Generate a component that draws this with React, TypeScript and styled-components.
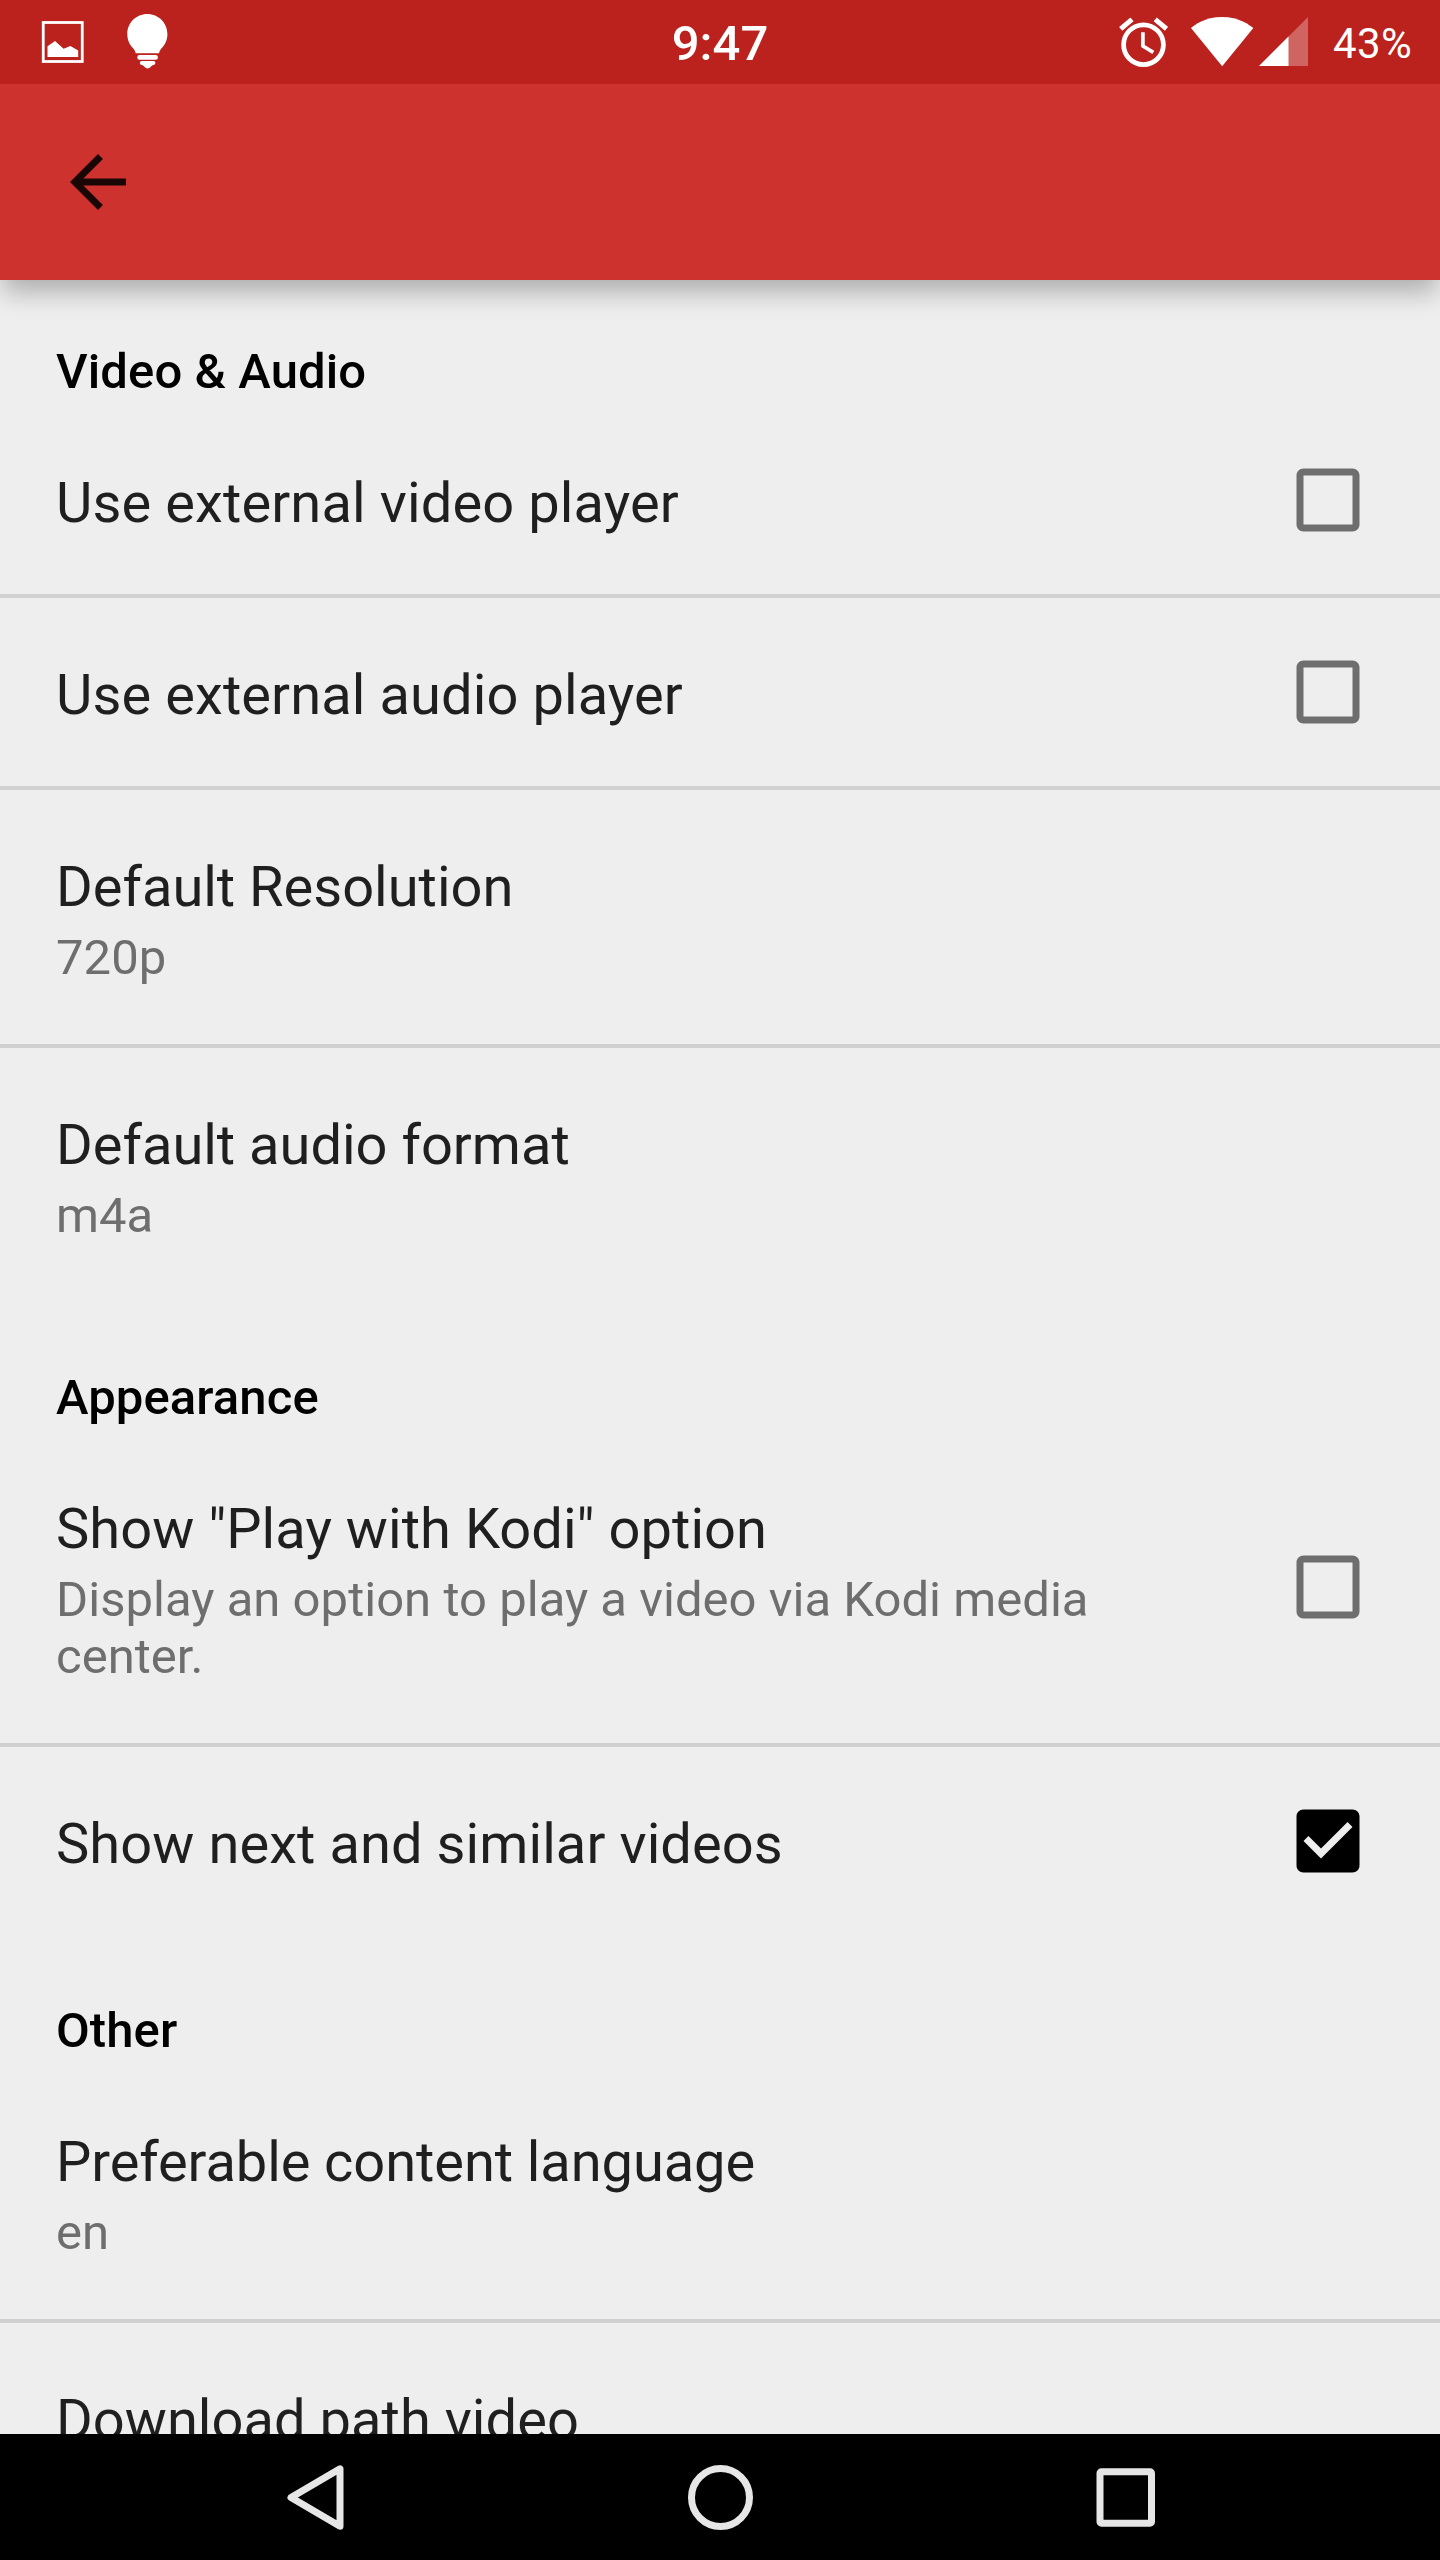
import React from 'react';
import styled, { createGlobalStyle } from 'styled-components';

const GlobalStyle = createGlobalStyle`
  *, *::before, *::after { box-sizing: border-box; }
  html, body { margin: 0; padding: 0; background: #eeeeee; }
  body { font-family: Roboto, "Noto Sans", sans-serif; overflow: hidden; }
  svg { display: block; flex: none; }
`;

const Screen = styled.div`
  width: 1440px;
  height: 2560px;
  display: flex;
  flex-direction: column;
  overflow: hidden;
  background: #eeeeee;
`;

const StatusBar = styled.header`
  flex: none;
  height: 84px;
  padding: 0 28px 0 40px;
  display: grid;
  grid-template-columns: 1fr auto 1fr;
  align-items: center;
  background: #bb211d;
  color: #ffffff;
`;

const StatusGroup = styled.div<{ $end?: boolean }>`
  display: flex;
  align-items: center;
  justify-content: ${(p) => (p.$end ? 'flex-end' : 'flex-start')};
  height: 84px;
`;

const Clock = styled.div`
  font-size: 49px;
  line-height: 58px;
  font-weight: 500;
  padding-top: 4px;
  margin-right: 12px;
`;

const Battery = styled.span`
  font-size: 42px;
  line-height: 50px;
  letter-spacing: 0.35px;
  padding-top: 4px;
  margin-left: 24px;
`;

const AppBar = styled.nav`
  flex: none;
  height: 196px;
  padding: 0 56px;
  display: flex;
  align-items: center;
  background: #cd322e;
  box-shadow: 0 15px 24px -3px rgba(0, 0, 0, 0.27);
  clip-path: inset(0 0 -60px 0);
  z-index: 1;
`;

const IconButton = styled.button`
  border: 0;
  padding: 0;
  background: none;
  color: rgba(0, 0, 0, 0.87);
`;

const Content = styled.main`
  flex: 1;
  min-height: 0;
  overflow: hidden;
`;

const Section = styled.section`
  padding-bottom: 4px;
`;

const SectionTitle = styled.h2`
  margin: 0;
  padding: 63px 56px 6px;
  font-size: 49px;
  line-height: 57px;
  font-weight: 500;
  letter-spacing: 0.1px;
  color: #000000;
`;

const Row = styled.div`
  display: flex;
  align-items: center;
  padding: 0 70px 0 56px;

  & + & {
    border-top: 4px solid #d0d0d0;
  }
`;

const RowText = styled.div`
  flex: 1;
  padding: 64px 140px 58px 0;
`;

const Title = styled.div<{ $tracking?: number }>`
  font-size: 56px;
  line-height: 66px;
  letter-spacing: ${(p) => p.$tracking ?? 0}px;
  color: #1f1f1f;
  white-space: nowrap;
`;

const Summary = styled.div`
  margin-top: 9px;
  font-size: 49px;
  line-height: 57px;
  letter-spacing: 0.03px;
  color: #6e6e6e;
`;

const CheckboxSlot = styled.div`
  padding-bottom: 1px;
`;

const NavBar = styled.footer`
  flex: none;
  height: 126px;
  padding: 0 112px;
  display: grid;
  grid-template-columns: repeat(3, 405px);
  justify-content: center;
  align-items: center;
  justify-items: center;
  background: #000000;
`;

function Checkbox({ checked }: { checked: boolean }) {
  return (
    <CheckboxSlot>
      <svg width="84" height="84" viewBox="0 0 24 24" role="checkbox" aria-checked={checked}>
        {checked ? (
          <path
            fill="#000"
            d="M19 3H5c-1.11 0-2 .9-2 2v14c0 1.1.89 2 2 2h14c1.11 0 2-.9 2-2V5c0-1.1-.89-2-2-2zm-9 14l-5-5 1.41-1.41L10 14.17l7.59-7.59L19 8l-9 9z"
          />
        ) : (
          <path
            fill="#6e6e6e"
            d="M19 5v14H5V5h14m0-2H5c-1.1 0-2 .9-2 2v14c0 1.1.9 2 2 2h14c1.1 0 2-.9 2-2V5c0-1.1-.9-2-2-2z"
          />
        )}
      </svg>
    </CheckboxSlot>
  );
}

interface Preference {
  title: string;
  tracking?: number;
  summary?: string;
  checked?: boolean;
}

const sections: { name: string; items: Preference[] }[] = [
  {
    name: 'Video & Audio',
    items: [
      { title: 'Use external video player', tracking: 0.12, checked: false },
      { title: 'Use external audio player', tracking: 0.1, checked: false },
      { title: 'Default Resolution', summary: '720p' },
      { title: 'Default audio format', summary: 'm4a' },
    ],
  },
  {
    name: 'Appearance',
    items: [
      {
        title: 'Show "Play with Kodi" option',
        tracking: 0.05,
        summary: 'Display an option to play a video via Kodi media center.',
        checked: false,
      },
      { title: 'Show next and similar videos', tracking: 0.08, checked: true },
    ],
  },
  {
    name: 'Other',
    items: [
      { title: 'Preferable content language', tracking: -0.08, summary: 'en' },
      { title: 'Download path video', tracking: 0.04 },
    ],
  },
];

const PictureIcon = () => (
  <svg width="46" height="84" viewBox="40 0 46 84">
    <rect x="43.25" y="22.5" width="39" height="39" fill="none" stroke="#fff" strokeWidth="2.8" />
    <path d="M47.5 57V46.2L55 41l8.6 7.7 6.8-2.8 7.8 4.6V57z" fill="#fff" />
  </svg>
);

const BulbIcon = () => (
  <svg width="84" height="84" viewBox="86 0 84 84">
    <g fill="#fff">
      <path d="M147.3 14c-11.2 0-20 8.9-20 20 0 6 2.3 10.6 5.6 14 1.5 1.6 2.3 3 2.8 5.3h23.3c.5-2.3 1.3-3.7 2.8-5.3 3.3-3.4 5.6-8 5.6-14 0-11.1-8.9-20-20.1-20z" />
      <rect x="137.3" y="55" width="20.6" height="4.8" rx="2.2" />
      <path d="M142 61h11.2a2 2 0 0 1 .4 4c-1.5.3-2.2.9-3 2a3.8 3.8 0 0 1-6 0c-.8-1.1-1.5-1.7-3-2a2 2 0 0 1 .4-4z" />
    </g>
  </svg>
);

const AlarmIcon = () => (
  <svg width="50" height="84" viewBox="1118 0 50 84">
    <g fill="none" stroke="#fff">
      <circle cx="1143.5" cy="44.7" r="19.9" strokeWidth="4.8" />
      <path d="M1142.9 32.2V46l10.4 6.4" strokeWidth="3.7" />
      <path d="M1120.7 28.8l11.3-9.5M1155.2 19.3l11.3 9.5" strokeWidth="4.9" />
    </g>
  </svg>
);

const WifiIcon = () => (
  <svg width="88" height="84" viewBox="1168 0 88 84">
    <path d="M1222.2 66.2L1191 28c3-2.7 14-11 31-11s28 8.300 31.300 11z" fill="#fff" />
  </svg>
);

const SignalIcon = () => (
  <svg width="53" height="84" viewBox="1256 0 53 84">
    <path d="M1259 66L1308 17v49z" fill="#fff" fillOpacity=".3" />
    <path d="M1259 66l29.5-29.5V66z" fill="#fff" />
  </svg>
);

const BackArrow = () => (
  <svg width="84" height="84" viewBox="0 0 24 24">
    <path fill="currentColor" d="M20 11H7.83l5.59-5.59L12 4l-8 8 8 8 1.41-1.41L7.83 13H20v-2z" />
  </svg>
);

const NavIcon = ({ kind }: { kind: 'back' | 'home' | 'recent' }) => (
  <svg width="80" height="80" viewBox="0 0 80 80" fill="none" stroke="#e6e6e6" strokeWidth="7" strokeLinejoin="round">
    {kind === 'back' && <path d="M65 11.8v57.4L16 40.5z" />}
    {kind === 'home' && <circle cx="40.5" cy="40.5" r="29" />}
    {kind === 'recent' && <rect x="15" y="14.7" width="51.5" height="51.5" rx="1.5" />}
  </svg>
);

export default function App() {
  return (
    <>
      <GlobalStyle />
      <Screen>
        <StatusBar>
          <StatusGroup>
            <PictureIcon />
            <BulbIcon />
          </StatusGroup>
          <Clock>9:47</Clock>
          <StatusGroup $end>
            <AlarmIcon />
            <WifiIcon />
            <SignalIcon />
            <Battery>43%</Battery>
          </StatusGroup>
        </StatusBar>
        <AppBar>
          <IconButton aria-label="Back">
            <BackArrow />
          </IconButton>
        </AppBar>
        <Content>
          {sections.map((section) => (
            <Section key={section.name}>
              <SectionTitle>{section.name}</SectionTitle>
              {section.items.map((item) => (
                <Row key={item.title}>
                  <RowText>
                    <Title $tracking={item.tracking}>{item.title}</Title>
                    {item.summary && <Summary>{item.summary}</Summary>}
                  </RowText>
                  {item.checked !== undefined && <Checkbox checked={item.checked} />}
                </Row>
              ))}
            </Section>
          ))}
        </Content>
        <NavBar>
          <NavIcon kind="back" />
          <NavIcon kind="home" />
          <NavIcon kind="recent" />
        </NavBar>
      </Screen>
    </>
  );
}
